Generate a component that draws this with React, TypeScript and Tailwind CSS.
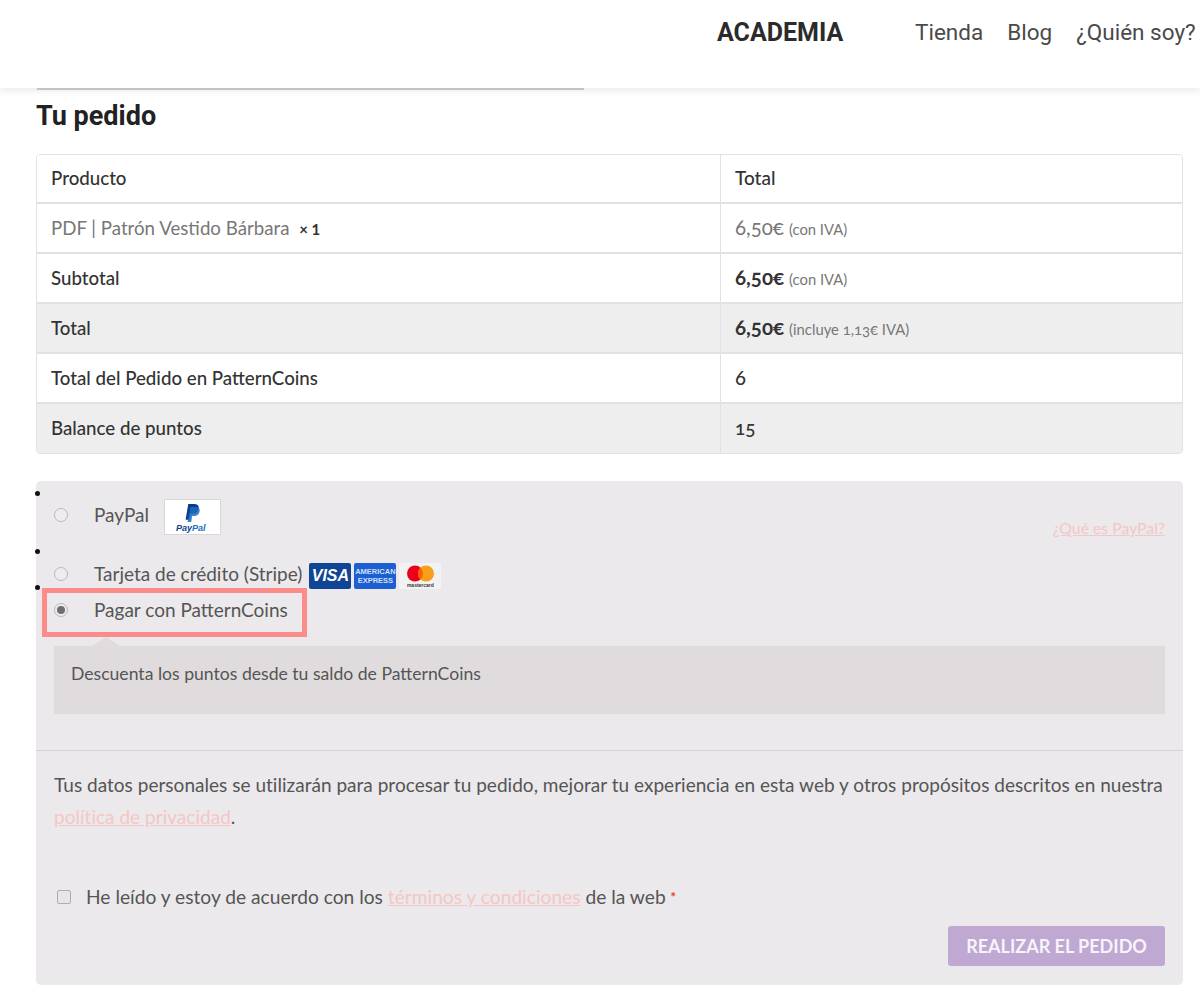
import React from 'react';

const bodyFont = "font-['Lato','Open_Sans',sans-serif]";

const Dot: React.FC<{ className: string }> = ({ className }) => (
    <span className={`absolute left-[-1px] h-[5px] w-[5px] rounded-full bg-[#111] ${className}`} />
);

const Radio: React.FC<{ checked?: boolean }> = ({ checked }) => (
    <span className="flex h-[14px] w-[14px] shrink-0 items-center justify-center rounded-full border-[1.5px] border-[#b9b7b9] bg-[#eeedee]">
        {checked && <span className="h-[8px] w-[8px] rounded-full bg-[#6e6e6e]" />}
    </span>
);

const PaypalMark = () => (
    <div className="flex h-[36px] w-[57px] flex-col items-center border border-[#d8d8d8] bg-white pt-[3px]">
        <svg width="18" height="20" viewBox="0 0 24 26">
            <path d="M7 1h8c4 0 6.500 2 6 6-.6 4.500-3.500 7-8 7h-3l-1.300 8H3.500z" fill="#0d3a8c" />
            <path d="M10 5h7c3.500 0 5.800 1.800 5.200 5.500-.6 4-3.400 6.500-7.400 6.500h-2.600L11 25H6z" fill="#1a6fc0" opacity="0.85" />
        </svg>
        <svg width="32" height="10" viewBox="0 0 32 10">
            <text x="0" y="8" fontFamily="Liberation Sans, sans-serif" fontSize="9" fontWeight="700" fontStyle="italic" fill="#123f8e">Pay<tspan fill="#1a6fc0">Pal</tspan></text>
        </svg>
    </div>
);

const CardLogos = () => (
    <div className="flex items-center gap-[3px]">
        <div className="flex h-[26px] w-[42px] items-center justify-center rounded-[2px] bg-[#0e4595]">
            <span className="font-['Liberation_Sans',sans-serif] text-[16px] font-bold italic leading-none text-white">VISA</span>
        </div>
        <div className="flex h-[26px] w-[42px] flex-col items-center justify-center rounded-[2px] bg-[#1d5fd0]">
            <span className="font-['Liberation_Sans',sans-serif] text-[7.500px] font-bold leading-[9px] text-[#cfe0fa]">AMERICAN</span>
            <span className="font-['Liberation_Sans',sans-serif] text-[7.500px] font-bold leading-[9px] text-[#cfe0fa]">EXPRESS</span>
        </div>
        <div className="flex h-[26px] w-[42px] flex-col items-center bg-[#f3f2f3] pt-[2px]">
            <svg width="29" height="17" viewBox="0 0 29 17">
                <circle cx="9" cy="8.500" r="8" fill="#eb001b" />
                <circle cx="20" cy="8.500" r="8" fill="#f79e1b" />
                <path d="M14.500 2.700a8 8 0 0 1 0 11.600a8 8 0 0 1 0-11.600z" fill="#ff5f00" />
            </svg>
            <span className="font-['Liberation_Sans',sans-serif] text-[5px] font-bold leading-[6px] text-[#333]">mastercard</span>
        </div>
    </div>
);

interface RowProps {
    label: React.ReactNode;
    children: React.ReactNode;
    height?: string;
    shaded?: boolean;
    strong?: boolean;
    last?: boolean;
}

const Row: React.FC<RowProps> = ({ label, children, height = 'h-[50px]', shaded, strong = true, last }) => (
    <div className={`flex ${height} items-center ${shaded ? 'bg-[#eeeeee]' : 'bg-white'} ${last ? '' : 'border-b-2 border-[#e2e2e2]'}`}>
        <div className={`flex h-full w-[684px] items-center border-r border-[#e2e2e2] pl-[14px] text-[18.700px] ${strong ? 'font-medium text-[#333]' : 'text-[#777]'}`}>
            {label}
        </div>
        <div className="flex flex-1 items-center pl-[14px] text-[19px] text-[#666]">{children}</div>
    </div>
);

const Price: React.FC<{ bold?: boolean; note: string }> = ({ bold, note }) => (
    <span className="-mt-[2px] flex items-baseline gap-[5px] oldstyle-nums">
        <span className={`text-[20.500px] ${bold ? 'font-bold text-[#333]' : 'text-[#777]'}`}>6,50€</span>
        <span className="text-[14.800px] text-[#777]">{note}</span>
    </span>
);

export default function App() {
    return (
        <div className={`h-[997px] w-[1200px] overflow-hidden bg-white ${bodyFont}`}>
            <header className="relative z-10 flex h-[88px] items-start bg-white pl-[717px] pt-[17px] font-['Roboto',sans-serif] shadow-[0_2px_8px_rgba(0,0,0,0.10)]">
                <span className="w-[198px] text-[25px] font-bold leading-[32px] text-[#2b2b2b]">ACADEMIA</span>
                <nav className="flex gap-[24px] whitespace-nowrap text-[22.500px] leading-[30px] text-[#4a4a4a]">
                    <span>Tienda</span>
                    <span>Blog</span>
                    <span>¿Quién soy?</span>
                </nav>
            </header>

            <div className="ml-[37px] h-[2px] w-[547px] bg-[#cfcfcf]" />

            <main className="ml-[36px] w-[1147px]">
                <h3 className="pt-[9px] font-['Roboto',sans-serif] text-[27px] font-bold leading-[34px] text-[#222]">Tu pedido</h3>

                <div className="mt-[21px] overflow-hidden rounded-[4px] border border-[#e2e2e2]">
                    <Row label="Producto" height="h-[49px]">
                        <span className="font-medium text-[#333]">Total</span>
                    </Row>
                    <Row label={<span>PDF | Patrón Vestido Bárbara <b className="ml-[5px] text-[15px] text-[#333]">× 1</b></span>} strong={false}>
                        <Price note="(con IVA)" />
                    </Row>
                    <Row label="Subtotal">
                        <Price bold note="(con IVA)" />
                    </Row>
                    <Row label="Total" shaded>
                        <Price bold note="(incluye 1,13€ IVA)" />
                    </Row>
                    <Row label="Total del Pedido en PatternCoins">
                        <span className="font-medium text-[#333]">6</span>
                    </Row>
                    <Row label="Balance de puntos" shaded last height="h-[49px]">
                        <span className="font-medium text-[#333] oldstyle-nums">15</span>
                    </Row>
                </div>

                <section className="relative mt-[27px] h-[504px] rounded-[5px] bg-[#ebe9eb]">
                    <Dot className="top-[10px]" />
                    <Dot className="top-[68px]" />
                    <Dot className="top-[104px]" />

                    <div className="flex h-[68px] items-center pl-[18px]">
                        <Radio />
                        <span className="ml-[26px] text-[19px] text-[#555]">PayPal</span>
                        <span className="ml-[15px] mt-[4px]"><PaypalMark /></span>
                        <a className="ml-auto mr-[18px] mt-[26px] text-[15.800px] text-[#f5c6c6] underline">¿Qué es PayPal?</a>
                    </div>
                    <div className="mt-[7px] flex h-[36px] items-center pl-[18px]">
                        <Radio />
                        <span className="ml-[26px] text-[19px] text-[#555]">Tarjeta de crédito (Stripe)</span>
                        <span className="ml-[7px] mt-[4px]"><CardLogos /></span>
                    </div>
                    <div className="flex h-[36px] items-center pl-[18px]">
                        <Radio checked />
                        <span className="ml-[26px] text-[19px] text-[#555]">Pagar con PatternCoins</span>
                    </div>

                    <div className="relative mx-[18px] mt-[18px] flex h-[68px] items-center bg-[#e0dcdd] pb-[12px] pl-[17px] text-[17.600px] text-[#555]">
                        <span className="absolute left-[38px] top-[-9px] h-0 w-0 border-x-[14px] border-b-[9px] border-x-transparent border-b-[#e0dcdd]" />
                        Descuenta los puntos desde tu saldo de PatternCoins
                    </div>

                    <div className="mt-[36px] border-t border-[#d4d2d4] pl-[18px] pr-[12px] pt-[18px] text-[19px] leading-[32px] tracking-[0.025px] text-[#555]">
                        Tus datos personales se utilizarán para procesar tu pedido, mejorar tu experiencia en esta web y otros propósitos descritos en nuestra{' '}
                        <a className="text-[#f5c6c6] underline">política de privacidad</a>.
                    </div>

                    <div className="mt-[48px] flex items-center pl-[21px] text-[19.200px] leading-[32px] text-[#555]">
                        <span className="h-[14px] w-[14px] shrink-0 rounded-[2px] border-[1.5px] border-[#aeacae] bg-[#e8e7e8]" />
                        <span className="ml-[15px]">He leído y estoy de acuerdo con los <a className="text-[#f5c6c6] underline">términos y condiciones</a> de la web <span className="align-top text-[13px] font-bold text-[#e2401c]">*</span></span>
                    </div>

                    <div className="mr-[18px] mt-[13px] flex justify-end">
                        <button className="flex h-[40px] w-[217px] items-center justify-center rounded-[3px] bg-[#bfa9d3] text-[18px] font-bold text-[#f7f3fa]">REALIZAR EL PEDIDO</button>
                    </div>

                    {/* recuadro del pantallazo */}
                    <div className="pointer-events-none absolute left-[6px] top-[107px] h-[49px] w-[265px] border-[5px] border-[#fb8c8a]" />
                </section>
            </main>
        </div>
    );
}
